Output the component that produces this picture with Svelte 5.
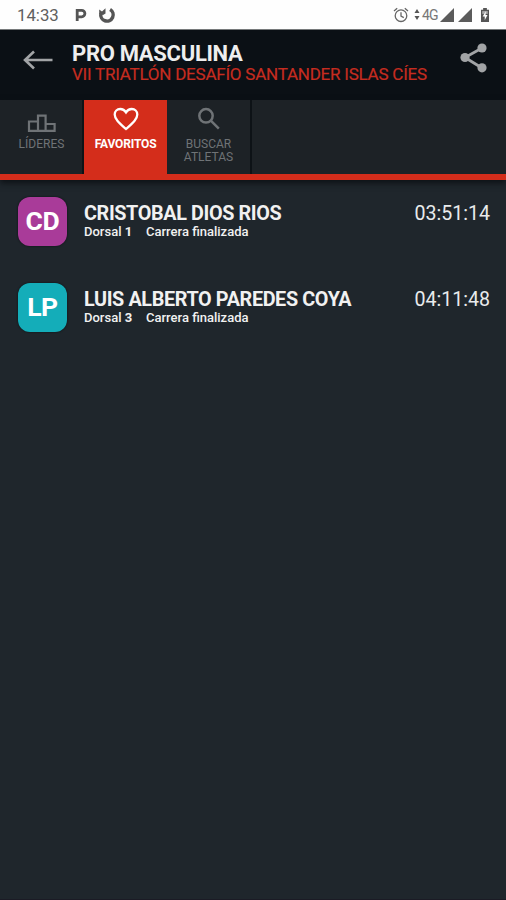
<script>
  const athletes = [
    { initials: 'CD', name: 'CRISTOBAL DIOS RIOS', bib: 1, status: 'Carrera finalizada', time: '03:51:14', color: '#a93b99' },
    { initials: 'LP', name: 'LUIS ALBERTO PAREDES COYA', bib: 3, status: 'Carrera finalizada', time: '04:11:48', color: '#14adb9' }
  ];
</script>

<div class="screen">
  <div class="status">
    <span class="clock">14:33</span>
    <svg class="p-icon" width="14" height="16" viewBox="0 0 14 16" fill="none" stroke="#555" stroke-width="2.800">
      <path d="M3.200 8.500V3.400H7.700a3.200 3.200 0 0 1 0 6.400H3.200V14" />
    </svg>
    <svg class="u-icon" width="18" height="18" viewBox="0 0 18 18" fill="none" stroke="#555">
      <path d="M2.900 7.500a6.200 6.200 0 1 0 9.200-4" stroke-width="3.500" />
      <path d="M1.200 8V3.500L4 5.500L7.500 2.200V7.500L5 9z" fill="#555" stroke="none" />
    </svg>
    <span class="space"></span>
    <svg class="alarm" width="16" height="16" viewBox="0 0 16 16" fill="none" stroke="#666" stroke-width="1.3">
      <circle cx="8" cy="8.7" r="5.8" />
      <path d="M1 4L4.2 1.3M15 4l-3.2-2.7M8 5.2v3.9l2.8 1.5" />
    </svg>
    <svg class="data" width="6" height="14" viewBox="0 0 6 14" fill="#555">
      <path d="M3 1l2.5 4h-5zM3 12L.5 8h5z" />
    </svg>
    <span class="net">4G</span>
    <svg class="signal" width="14" height="14" viewBox="0 0 14 14"><path d="M14 0v14H0z" fill="#5b5b5b" /></svg>
    <svg class="signal" width="14" height="14" viewBox="0 0 14 14"><path d="M14 0v14H0z" fill="#5b5b5b" /></svg>
    <svg class="battery" width="10" height="14" viewBox="0 0 10 15">
      <path d="M3 0h4v2h2.300v13H.7V2H3z" fill="#555" />
      <path d="M2 3.300h6v3H2z" fill="#aaa" />
      <path d="M5.800 3.500L2.500 9h2.200v4l3-5.400H5.600z" fill="#fff" />
    </svg>
  </div>

  <header>
    <svg class="back" width="30" height="20" viewBox="0 0 30 20" fill="none" stroke="#a2a4a6" stroke-width="2.6">
      <path d="M29.500 10H2M11 1.500L2 10l9 8.500" />
    </svg>
    <div class="titles">
      <h1>PRO MASCULINA</h1>
      <p>VII TRIATLÓN DESAFÍO SANTANDER ISLAS CÍES</p>
    </div>
    <svg class="share" width="27" height="30" viewBox="0 0 27 30" fill="#a2a4a6">
      <path d="M22 5L5 14.500L22 25" fill="none" stroke="#a2a4a6" stroke-width="2.800" />
      <circle cx="22" cy="5" r="4.600" /><circle cx="5" cy="14.500" r="4.600" /><circle cx="22" cy="24.800" r="4.600" />
    </svg>
  </header>

  <nav>
    <div class="tab">
      <svg width="30" height="19" viewBox="0 0 30 19" fill="none" stroke="#6f7376" stroke-width="2.200">
        <path d="M2 7.500h9v9.400H2zM11 1.600h7.600v15.300H11zM18.600 10h9v6.900h-9z" />
      </svg>
      <span>LÍDERES</span>
    </div>
    <div class="tab active">
      <svg width="28" height="24" viewBox="0 0 28 24" fill="none" stroke="#fff" stroke-width="2.300">
        <path d="M14 22C7.500 16.200 2.700 12.200 2.700 7.500C2.700 4.200 5.200 2 8.200 2C10.600 2 12.800 3.300 14 5.300C15.200 3.300 17.400 2 19.800 2C22.800 2 25.300 4.200 25.300 7.500C25.300 12.200 20.500 16.200 14 22z" />
      </svg>
      <span>FAVORITOS</span>
    </div>
    <div class="tab">
      <svg width="24" height="24" viewBox="0 0 24 24" fill="none" stroke="#6f7376" stroke-width="2.500">
        <circle cx="9" cy="8.800" r="6.700" /><path d="M13.800 13.600l8 8" />
      </svg>
      <span>BUSCAR<br />ATLETAS</span>
    </div>
  </nav>

  <main>
    {#each athletes as a}
      <div class="row">
        <div class="avatar" style="background: {a.color}">{a.initials}</div>
        <div class="info">
          <div class="name">{a.name}</div>
          <div class="detail"><span class="bib">Dorsal <b>{a.bib}</b></span><span>{a.status}</span></div>
        </div>
        <div class="time">{a.time}</div>
      </div>
    {/each}
  </main>
</div>

<style>
  :global(body) { margin: 0; background: #1f262c; }
  .screen { width: 506px; height: 900px; overflow: hidden; display: flex; flex-direction: column; background: #1f262c; font-family: Roboto, "Noto Sans", sans-serif; box-sizing: border-box; border-bottom: 1px solid #1b1b25; }
  svg { display: block; flex: none; }
  .status { height: 30px; flex: none; box-sizing: border-box; background: #fefefe; border-bottom: 1px solid #777a7b; display: flex; align-items: center; padding: 0 16px 0 17px; color: #606060; }
  .clock { font-size: 16.800px; width: 57px; padding-top: 1px; }
  .p-icon { margin: 1px 10px 0 0; }
  .space { flex: 1; }
  .alarm { margin-right: 5px; }
  .data { margin-right: 2px; }
  .net { font-size: 14px; width: 18px; letter-spacing: -.900px; color: #777; }
  .signal { margin-right: 4px; }
  .battery { margin: 1px 0 0 4px; }
  header { height: 70px; flex: none; background: #0b1015; display: flex; align-items: flex-start; }
  .back { margin: 20px 19px 0 23px; }
  .titles { flex: 1; padding-top: 12px; white-space: nowrap; }
  h1 { margin: 0; font-size: 22px; line-height: 24px; font-weight: 700; color: #eee; letter-spacing: -.3px; }
  p { margin: -2px 0 0; font-size: 17px; line-height: 20px; color: #c62c20; letter-spacing: -.230px; -webkit-text-stroke: .2px; }
  .share { margin: 13px 19px 0 0; }
  nav { height: 80px; flex: none; box-sizing: border-box; background: #1d2226; border-bottom: 6px solid #d42d1b; box-shadow: 0 3px 6px #0d1115; display: flex; position: relative; }
  .tab { width: 84px; box-sizing: border-box; border-right: 2px solid #0d1216; display: flex; flex-direction: column; align-items: center; font-size: 12px; line-height: 13px; text-align: center; color: #6f7376; }
  .tab svg { margin: 7px 0; }
  .tab:first-child { padding-left: 1px; }
  .tab:first-child svg { margin: 14px 0 5px; }
  .tab.active { width: 83px; background: #d42d1b; color: #fff; font-weight: 700; letter-spacing: -.15px; border-right: 0; }
  .tab:last-child { width: 85px; }
  main { padding: 17px 16px 0 18px; }
  .row { height: 86px; display: flex; align-items: flex-start; }
  .avatar { width: 49px; height: 49px; border-radius: 12px; box-sizing: border-box; padding-bottom: 2px; box-shadow: 0 0 2px #0a0d10; color: #fff; font-size: 26.500px; font-weight: 700; letter-spacing: -.4px; display: flex; align-items: center; justify-content: center; }
  .info { flex: 1; margin-left: 17px; white-space: nowrap; color: #f1f1f1; }
  .name { font-size: 19.800px; line-height: 22px; font-weight: 700; letter-spacing: -.37px; padding-top: 6px; }
  .detail { display: flex; font-size: 13px; line-height: 15px; font-weight: 500; margin-top: -1px; }
  .bib { width: 62px; }
  .time { font-size: 19.600px; line-height: 22px; padding-top: 6px; color: #e9ebec; }
</style>
